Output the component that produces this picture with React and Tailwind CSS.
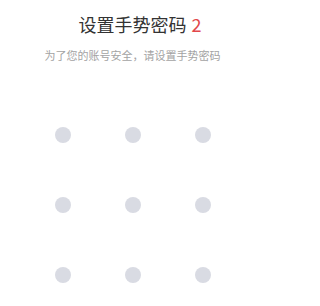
export default function App() {
  const dots = Array.from({ length: 9 });
  return (
    <div className="w-[265px] h-[306px] overflow-hidden bg-white flex flex-col items-center" style={{ fontFamily: '"Noto Sans CJK SC", "Noto Sans", sans-serif' }}>
      <div className="relative mt-[12px] h-[25px] flex items-center">
        <span className="text-[18px] leading-[25px] text-[#333333]">设置手势密码</span>
        <span className="absolute left-full ml-[5px] top-0 text-[18px] leading-[25px] text-[#e2474b]">2</span>
      </div>
      <div className="mt-[10px] text-[11px] leading-[16px] text-[#a3a3a3]">为了您的账号安全，请设置手势密码</div>
      <div className="mt-[37px] shrink-0 grid grid-cols-[70px_70px_70px] grid-rows-[70px_70px_70px]">
        {dots.map((_, i) => (
          <div key={i} className="flex items-center justify-center">
            <div className="w-[16px] h-[16px] rounded-full bg-[#d9dbe3]" />
          </div>
        ))}
      </div>
    </div>
  );
}
